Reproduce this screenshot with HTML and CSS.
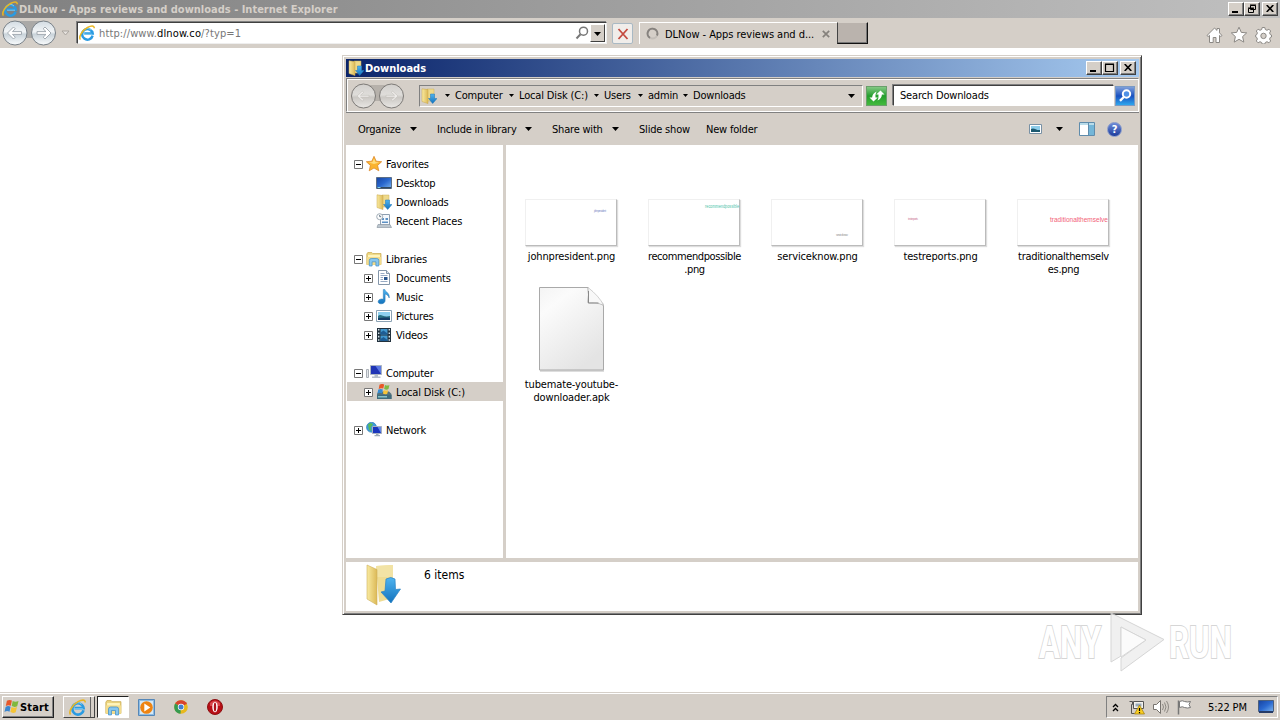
FILE: index.html
```html
<!DOCTYPE html>
<html lang="en">
<head>
<meta charset="utf-8">
<title>DLNow - Apps reviews and downloads</title>
<link rel="stylesheet" href="styles.css">
</head>
<body>
<svg class="defs" width="0" height="0" aria-hidden="true">
  <defs>
    <linearGradient id="gFolder" x1="0" x2="1"><stop offset="0" stop-color="#f9eaa0"/><stop offset="1" stop-color="#dcb957"/></linearGradient>
    <linearGradient id="gBlue" x1="0" y1="0" x2="0" y2="1"><stop offset="0" stop-color="#4fb4f0"/><stop offset="1" stop-color="#1272bd"/></linearGradient>
    <linearGradient id="gPaper" x1="0" y1="0" x2=".6" y2="1"><stop offset="0" stop-color="#f4f4f4"/><stop offset=".25" stop-color="#fbfbfb"/><stop offset="1" stop-color="#e4e4e4"/></linearGradient>
    <linearGradient id="gOrb" x1="0" y1="0" x2="0" y2="1"><stop offset="0" stop-color="#d3dce3"/><stop offset=".45" stop-color="#f1f4f6"/><stop offset=".55" stop-color="#c9d3da"/><stop offset="1" stop-color="#fafcfd"/></linearGradient>
    <linearGradient id="gOrb2" x1="0" y1="0" x2="0" y2="1"><stop offset="0" stop-color="#d2d0cd"/><stop offset=".45" stop-color="#dfddda"/><stop offset=".55" stop-color="#cbc8c4"/><stop offset="1" stop-color="#e9e7e4"/></linearGradient>
    <linearGradient id="gScreen" x1="0" y1="0" x2="1" y2="1"><stop offset="0" stop-color="#1743a0"/><stop offset=".5" stop-color="#2a68cf"/><stop offset="1" stop-color="#7cb5ee"/></linearGradient>
    <symbol id="ie" viewBox="0 0 16 16">
      <path d="M13.600 10.600A5.300 5.300 0 1 1 13.700 8.600H5.200" fill="none" stroke="#2a9be2" stroke-width="2.500"/>
      <path d="M13 9.200H5M4 6a5 5 0 0 1 8-1" fill="none" stroke="#8fd6f7" stroke-width=".8"/>
      <path d="M1.400 14.600C-.6 12 3 5.500 8.500 2.500 12 .6 15.500.3 15.200 3.300" fill="none" stroke="#e9b624" stroke-width="1.500"/>
    </symbol>
    <symbol id="dlfolder" viewBox="0 0 16 16">
      <path d="M6 1h7v12H6z" fill="#eed98a" stroke="#cfb05a" stroke-width=".5"/>
      <path d="M1 .8l6 .8v14L1 13.500z" fill="url(#gFolder)" stroke="#c9a648" stroke-width=".5"/>
      <path d="M9.500 6h4v4.500H16l-4.300 5-4.200-5h2z" fill="url(#gBlue)" stroke="#1f76b8" stroke-width=".5"/>
    </symbol>
    <symbol id="star" viewBox="0 0 16 16"><path d="M8 .3l2.200 4.900 5.500.5-4.100 3.700 1.200 5.400L8 12l-4.800 2.800 1.200-5.400L.3 5.700l5.500-.5z" fill="#fbb32e" stroke="#d98324" stroke-width=".7"/><path d="M8 2.500l1.500 3.600 3.700.4-5.200 1.600-5.200-1.600 3.700-.4z" fill="#ffdc7c"/></symbol>
    <symbol id="desktop" viewBox="0 0 16 16"><path d="M.5 2.500h15v11H.5z" fill="url(#gScreen)" stroke="#5c6f87"/><path d="M1 12h14v1.500H1z" fill="#34495f"/><path d="M1.500 12h3v1h-3z" fill="#7fd1ec"/></symbol>
    <symbol id="recent" viewBox="0 0 16 16"><path d="M4.500 1.500h9V12h-9z" fill="#f5f9fd" stroke="#8d9eb0"/><path d="M6 5h2v2H6zm3.500 0H12v2H9.500zM6 8.500h6v1.500H6z" fill="#5d91c5"/><path d="M2 11.500h12l1.500 3H1z" fill="#bcc6ce" stroke="#84919c" stroke-width=".6"/><circle cx="3.700" cy="3.700" r="3" fill="#fff" stroke="#a0abb5"/><path d="M3.700 1.900v1.800h1.500" fill="none" stroke="#678"/></symbol>
    <symbol id="lib" viewBox="0 0 16 16"><path d="M.8 3l1-1.500h4l1 1H15v11H.8z" fill="#ecd57f" stroke="#c8a74b" stroke-width=".7"/><path d="M2 3.800h12v4H2z" fill="#fff4bb"/><path d="M.8 6h14.400v7.800H.8z" fill="#f3dc8c"/><path d="M3.300 15V9.500q0-2 2-2h5.500q2 0 2 2V15H9.900v-4.200H6.100V15z" fill="#86c6ef" stroke="#3f8ec9" stroke-width=".7"/></symbol>
    <symbol id="doc" viewBox="0 0 16 16"><path d="M2.500.5h8l3 3v11h-11z" fill="#fff" stroke="#8496aa"/><path d="M10.500.5v3h3" fill="#dce6ef" stroke="#8496aa"/><path d="M4.500 3.500h4m-4 2h7m-7 2H7m-2.500 2H7m-2.500 2h7" stroke="#98abc4"/><path d="M8 7h3.500v3H8z" fill="#28558d"/></symbol>
    <symbol id="music" viewBox="0 0 16 16"><path d="M7.300.5h1.500c.6 2.500 5.200 3.600 4.400 8.500-.8-2.500-2.500-3.600-4.100-4v6.700c0 3.600-6.800 4.200-7 1.100-.1-2.200 3-3.500 5.200-2.500z" fill="url(#gBlue)" stroke="#2878b4" stroke-width=".5"/></symbol>
    <symbol id="pic" viewBox="0 0 16 16"><path d="M.5 2.500h15v11H.5z" fill="#fff" stroke="#8ba2b4"/><path d="M2 4h12v8H2z" fill="#8ed0ef"/><path d="M2 8c3-3 5 2 12 0v4H2z" fill="#287083"/><path d="M2 10c5 0 8-1 12 0v2H2z" fill="#163e68"/></symbol>
    <symbol id="video" viewBox="0 0 16 16"><path d="M1 1h14v14H1z" fill="#22313d"/><path d="M4.500 2h7v5.500h-7zm0 6.500h7V14h-7z" fill="#4298cf"/><path d="M4.500 5.500l3-2 4 3v1h-7zm0 6.500l3-2 4 3v1h-7z" fill="#1d5c94"/><path d="M2 2h1.400v1.600H2zm0 3.400h1.400V7H2zm0 3.400h1.400v1.600H2zm0 3.400h1.400v1.600H2zM12.600 2H14v1.600h-1.400zm0 3.400H14V7h-1.400zm0 3.400H14v1.600h-1.400zm0 3.400H14v1.600h-1.400z" fill="#d3e3ec"/></symbol>
    <symbol id="computer" viewBox="0 0 16 16"><path d="M.5 4.500h2v8h-2z" fill="#e6e9ec" stroke="#aab0b7"/><path d="M4.500.5h11v9h-11z" fill="#2035b5" stroke="#aab4c2"/><path d="M9.500 1h5.500v8z" fill="#5c7ae4"/><path d="M8.500 10h3.500v1.500h2.500V13H6v-1.500h2.500z" fill="#b5bfca"/></symbol>
    <symbol id="disk" viewBox="0 0 16 16"><path d="M1 9.500l2-2h10l2.500 2.500v5H1z" fill="#52727d"/><path d="M1 11h14.500v4H1z" fill="#3e6b7c"/><path d="M2 12h9v1.500H2z" fill="#86c2c9"/><path d="M3.500.8q2.500-1.500 4.700-.3L7.300 4.600q-2.300-1-4.600.3z" fill="#e95827"/><path d="M9 .9q2.400 1.200 4.400 0l-.9 4.200q-2.200 1.200-4.400-.2z" fill="#7fb943"/><path d="M2.300 5.600q2.200-1.200 4.600-.2L6 9.200q-2.300-1-4.600.3z" fill="#368cd2"/><path d="M7.800 5.900q2.200 1.200 4.400.1l-.9 3.800q-2.200 1.200-4.400-.2z" fill="#f7c536"/></symbol>
    <symbol id="network" viewBox="0 0 16 16"><circle cx="5.500" cy="5.300" r="5" fill="#3f9bdc" stroke="#257ab3" stroke-width=".6"/><path d="M2 2.500q3-3 5 0l-2.500 3 1 3.500L3 8z" fill="#58bb59"/><path d="M6.500 4.500h9v7h-9z" fill="#1b36bd" stroke="#a6b0c0"/><path d="M11.500 5H15v6z" fill="#658ae9"/><path d="M10 12h2.500v1H14v1.300H8.500V13H10z" fill="#9daab7"/></symbol>
    <symbol id="flag" viewBox="0 0 16 16"><path d="M2.900 1.800q2.500-1.600 5-.2L6.800 6.800q-2.400-1.400-5 .2z" fill="#e7582a"/><path d="M8.700 2q2.700 1.500 5.800-.1l-1.300 5.300q-2.700 1.500-5.500-.1z" fill="#80b83e"/><path d="M1.600 7.900q2.500-1.600 5-.2l-1.100 5q-2.400-1.400-5 .2z" fill="#3b86cf"/><path d="M7.500 8.100q2.700 1.500 5.500-.1l-1.300 5.200q-2.700 1.500-5.300-.1z" fill="#f5c435"/></symbol>
    <symbol id="plus" viewBox="0 0 9 9"><path d="M.5.5h8v8h-8z" fill="#fff" stroke="#777"/><path d="M2 4.500h5M4.500 2v5" stroke="#000"/></symbol>
    <symbol id="minus" viewBox="0 0 9 9"><path d="M.5.5h8v8h-8z" fill="#fff" stroke="#777"/><path d="M2 4.500h5" stroke="#000"/></symbol>
    <symbol id="arr" viewBox="0 0 7 4"><path d="M0 0h7L3.500 4z" fill="#000"/></symbol>
    <symbol id="xmark" viewBox="0 0 8 7"><path d="M.7 0L7.300 7M7.300 0L.7 7" stroke="#000" stroke-width="1.600"/></symbol>
  </defs>
</svg>

<div class="screen">
  <header class="ie-title">
    <svg class="i16"><use href="#ie"/></svg>
    <span class="ie-title-text">DLNow - Apps reviews and downloads - Internet Explorer</span>
    <div class="winbtns">
      <span class="wb"><svg width="12" height="10"><path d="M2 8h6" stroke="#000" stroke-width="2"/></svg></span>
      <span class="wb"><svg width="12" height="10"><path d="M4.500 1.500h5v4h-5zM4 1h6M2.500 4.500h5v4h-5zM2 4h6" fill="none" stroke="#000"/></svg></span>
      <span class="wb close"><svg width="8" height="7"><use href="#xmark"/></svg></span>
    </div>
  </header>
  <nav class="ie-nav">
    <svg class="orbs" width="57" height="28" viewBox="0 0 57 28">
      <path d="M14 2h29v17H14z" fill="#aaa9a7"/>
      <circle cx="15" cy="14" r="12" fill="url(#gOrb)" stroke="#788087"/><circle cx="43.500" cy="14" r="12" fill="url(#gOrb)" stroke="#788087"/>
      <path d="M7.500 14l6-6 1.800 1.800-2.800 2.800h9v2.800h-9l2.800 2.800L13.500 20zM51 14l-6-6-1.800 1.800 2.800 2.800h-9v2.800h9l-2.800 2.800L45 20z" fill="#fff" stroke="#9ba3aa" stroke-width=".9"/>
    </svg>
    <svg class="histarr" width="9" height="6"><path d="M1 1h7L4.500 5z" fill="#e6e2de" stroke="#aaa59f"/></svg>
    <div class="addr">
      <svg class="i16"><use href="#ie"/></svg>
      <span class="url">http://www.<b>dlnow.co</b>/?typ=1</span>
      <svg width="14" height="14" viewBox="0 0 14 14"><circle cx="8.500" cy="5.200" r="4" fill="none" stroke="#777" stroke-width="1.500"/><path d="M5.500 8.300L1.500 12.500" stroke="#777" stroke-width="2"/></svg>
      <span class="drop"><svg width="7" height="4"><use href="#arr"/></svg></span>
    </div>
    <span class="stop"><svg width="12" height="12" viewBox="0 0 12 12"><path d="M1.500 1l9 10M10.500 1l-9 10" stroke="#c44b40" stroke-width="1.800"/></svg></span>
    <div class="tab">
      <svg width="13" height="13" viewBox="0 0 13 13"><circle cx="6.500" cy="6.500" r="4.900" fill="none" stroke="#c3beb8" stroke-width="2"/><path d="M4 10.800A4.900 4.900 0 1 1 11 8.500" fill="none" stroke="#86827e" stroke-width="2"/></svg>
      <span class="tab-text">DLNow - Apps reviews and d...</span>
      <svg width="8" height="8" viewBox="0 0 8 8"><path d="M.8.800l6.400 6.400M7.200.800L.8 7.200" stroke="#85817c" stroke-width="1.700"/></svg>
    </div>
    <span class="newtab"></span>
    <svg class="tools" width="66" height="18" viewBox="0 0 66 18" fill="#fff" stroke="#8b8884" stroke-width="1">
      <path d="M1 9.500L8.500 2l2.500 2.400V2.500h2.500v4.400l2.500 2.600-1.200 1-1.300-1.100V16.500h-3.500v-5H7.200v5H3.500V9.400l-1.300 1.100z"/>
      <path d="M33 1.200l2.300 5.200 5.400.5-4.100 3.700 1.200 5.500-4.800-2.800-4.800 2.800 1.200-5.500-4.100-3.700 5.400-.5z"/>
      <path d="M56.200 1.500h2.600l.5 2 1.700.8 1.900-1.100 1.800 1.800-1.100 1.900.7 1.700 1.200.4v2l-1.200.4-.7 1.700 1.100 1.900-1.800 1.800-1.900-1.100-1.700.8-.5 1.500h-2.600l-.5-1.500-1.700-.8-1.900 1.100-1.800-1.800 1.100-1.900-.7-1.700-1-.4V9l1-.4.7-1.700-1.100-1.900 1.800-1.800L54 4.300l1.700-.8z"/><circle cx="57.500" cy="9.900" r="2.700" fill="#d5cfc8"/>
    </svg>
  </nav>

  <main class="page"></main>

  <footer class="taskbar">
    <button class="start"><svg class="i16"><use href="#flag"/></svg><span>Start</span></button>
    <span class="tb tb-ie"><svg width="17" height="17"><use href="#ie"/></svg></span>
    <span class="tb tb-ex"><svg width="17" height="17"><use href="#lib"/></svg></span>
    <svg class="q" width="17" height="17" viewBox="0 0 17 17"><path d="M.5.5h16v16H.5z" fill="#8dbce4" stroke="#5587b8"/><path d="M2 2h13v13H2z" fill="#d6e9f6"/><circle cx="8.500" cy="8.500" r="6.300" fill="#ee8413"/><path d="M6.300 4.500l6 4-6 4z" fill="#fff"/></svg>
    <svg class="q" width="14" height="14" viewBox="0 0 14 14"><circle cx="7" cy="7" r="6.800" fill="#e8b91e"/><path d="M7 7L1.100 3.600A6.800 6.800 0 0 1 13 3.700z" fill="#d8432f"/><path d="M7 7L1.100 3.600A6.800 6.800 0 0 0 6.500 13.800z" fill="#369a50"/><circle cx="7" cy="7" r="3.200" fill="#fff"/><circle cx="7" cy="7" r="2.500" fill="#437fd0"/></svg>
    <svg class="q" width="16" height="16" viewBox="0 0 16 16"><circle cx="8" cy="8" r="7.500" fill="#b80f16" stroke="#8d1012"/><path d="M3 4q5-5 10 0v3H3z" fill="#d8474a"/><ellipse cx="8" cy="8" rx="2.700" ry="5.300" fill="#fff"/><ellipse cx="8" cy="8" rx="1.200" ry="4.500" fill="#ad1218"/></svg>
    <div class="tray">
      <svg width="7" height="9" viewBox="0 0 7 9"><path d="M1 4l2.500-2.500L6 4M1 8l2.500-2.500L6 8" fill="none" stroke="#000" stroke-width="1.300"/></svg>
      <svg width="16" height="16" viewBox="0 0 16 16"><path d="M.5 2.500h3v3h-1v9h3" fill="none" stroke="#555"/><path d="M4.500 2.500h10v7h-10z" fill="#f4f2ed" stroke="#555"/><path d="M6.500 4.500h6v3h-6z" fill="#9ab"/><path d="M10.500 6l5 9h-10z" fill="#f9cd21" stroke="#9c7a0e" stroke-width=".7"/><path d="M10.500 9v3m0 1v1.200" stroke="#000" stroke-width="1.200"/></svg>
      <svg width="17" height="16" viewBox="0 0 17 16"><path d="M1.500 5.500h3l4-4v13l-4-4h-3z" fill="#fff" stroke="#77736e"/><path d="M10.500 5q2 3 0 6M12.500 3.500q3 4.500 0 9M14.500 2q4 6 0 12" fill="none" stroke="#8d8983"/></svg>
      <svg width="16" height="16" viewBox="0 0 16 16"><path d="M2.500 15.500V1.500" stroke="#777" stroke-width="1.500"/><path d="M3.500 2.500q3-1.500 5 0 3 1 6 0l-1.500 3 1.500 3q-3 1-6 0-2-1.500-5 0z" fill="#fff" stroke="#777"/></svg>
      <span class="clock">5:22 PM</span>
      <svg width="16" height="14" viewBox="0 0 16 14"><path d="M.5.500h15v11H.5z" fill="url(#gScreen)" stroke="#4d607c"/><path d="M1 11h14v2H1z" fill="#263b67"/></svg>
    </div>
  </footer>

  <section class="win">
    <header class="win-title">
      <svg class="i16"><use href="#dlfolder"/></svg><span class="win-name">Downloads</span>
      <div class="winbtns">
        <span class="wb"><svg width="12" height="10"><path d="M2 8h6" stroke="#000" stroke-width="2"/></svg></span>
        <span class="wb"><svg width="12" height="10"><path d="M1.500 1.500h8v7h-8zM1 1h9" fill="none" stroke="#000" stroke-width="1.200"/></svg></span>
        <span class="wb close"><svg width="8" height="7"><use href="#xmark"/></svg></span>
      </div>
    </header>
    <div class="win-nav">
      <svg class="orbs2" width="56" height="28" viewBox="0 0 56 28"><path d="M14 3h28v16H14z" fill="#b6b1ab"/><circle cx="14.500" cy="14" r="12" fill="url(#gOrb2)" stroke="#7d7a77"/><circle cx="42.500" cy="14" r="12" fill="url(#gOrb2)" stroke="#7d7a77"/><path d="M8 14l5.500-5 1 1.500-3 2.800H20v1.800h-8.500l3 2.500-1 1.500zM49 14l-5.500-5-1 1.500 3 2.800H37v1.800h8.500l-3 2.500 1 1.500z" fill="#eeecea" stroke="#c2bfbb" stroke-width=".6"/></svg>
      <div class="crumbs">
        <svg class="i16"><use href="#dlfolder"/></svg>
        <svg class="a"><use href="#arr"/></svg><span>Computer</span>
        <svg class="a"><use href="#arr"/></svg><span class="ld">Local Disk (C:)</span>
        <svg class="a"><use href="#arr"/></svg><span>Users</span>
        <svg class="a"><use href="#arr"/></svg><span>admin</span>
        <svg class="a"><use href="#arr"/></svg><span>Downloads</span>
        <svg class="a7"><use href="#arr"/></svg>
      </div>
      <span class="refresh"><svg width="18" height="16" viewBox="0 0 18 16"><path d="M5.500 2.500L1.500 6.500h2.600q.2 4 4.400 6-1.300-3-1-6h2.300zM12.500 13.500l4-4h-2.600q-.2-4-4.400-6 1.300 3 1 6H8.200z" fill="#fff" transform="matrix(1 0 0 -1 0 16)"/></svg></span>
      <div class="search">Search Downloads</div>
      <span class="searchbtn"><svg width="16" height="16" viewBox="0 0 16 16"><circle cx="9.500" cy="6" r="3.700" fill="#4f91e6" stroke="#fff" stroke-width="2"/><path d="M6.800 9L3 12.800" stroke="#fff" stroke-width="2.400"/></svg></span>
    </div>
    <div class="win-tools">
      <span>Organize</span><svg class="a7"><use href="#arr"/></svg>
      <span>Include in library</span><svg class="a7"><use href="#arr"/></svg>
      <span>Share with</span><svg class="a7"><use href="#arr"/></svg>
      <span>Slide show</span><span>New folder</span>
      <svg width="13" height="11" viewBox="0 0 13 11"><path d="M.5.5h12v9H.5z" fill="#fff" stroke="#7891a5"/><path d="M2 2h9v6H2z" fill="#8ecdea"/><path d="M2 5c3-2 5 1.500 9 1v2H2z" fill="#1c5970"/></svg>
      <svg class="a7"><use href="#arr"/></svg>
      <svg width="16" height="14" viewBox="0 0 16 14"><path d="M.5.5h15v13H.5z" fill="#fff" stroke="#5f8cac"/><path d="M1 1h14v2H1z" fill="#b9dcea"/><path d="M10 3h5v10h-5z" fill="#74b6d8"/><path d="M9.500 1v12" stroke="#5f8cac"/></svg>
      <span class="help">?</span>
    </div>
    <div class="win-body">
      <aside class="tree">
        <div class="row r0"><svg class="tg"><use href="#minus"/></svg><svg class="i16"><use href="#star"/></svg><span>Favorites</span></div>
        <div class="row leaf"><svg class="i16"><use href="#desktop"/></svg><span>Desktop</span></div>
        <div class="row leaf"><svg class="i16"><use href="#dlfolder"/></svg><span>Downloads</span></div>
        <div class="row leaf"><svg class="i16"><use href="#recent"/></svg><span>Recent Places</span></div>
        <div class="row r0 gap"><svg class="tg"><use href="#minus"/></svg><svg class="i16"><use href="#lib"/></svg><span>Libraries</span></div>
        <div class="row r1"><svg class="tg"><use href="#plus"/></svg><svg class="i16"><use href="#doc"/></svg><span>Documents</span></div>
        <div class="row r1"><svg class="tg"><use href="#plus"/></svg><svg class="i16"><use href="#music"/></svg><span>Music</span></div>
        <div class="row r1"><svg class="tg"><use href="#plus"/></svg><svg class="i16"><use href="#pic"/></svg><span>Pictures</span></div>
        <div class="row r1"><svg class="tg"><use href="#plus"/></svg><svg class="i16"><use href="#video"/></svg><span>Videos</span></div>
        <div class="row r0 gap"><svg class="tg"><use href="#minus"/></svg><svg class="i16"><use href="#computer"/></svg><span>Computer</span></div>
        <div class="row r1 sel"><svg class="tg"><use href="#plus"/></svg><svg class="i16"><use href="#disk"/></svg><span class="ld">Local Disk (C:)</span></div>
        <div class="row r0 gap"><svg class="tg"><use href="#plus"/></svg><svg class="i16"><use href="#network"/></svg><span>Network</span></div>
      </aside>
      <div class="files">
        <figure><div class="thumb"><svg width="90" height="45"><text x="68" y="12" class="tiny" fill="#8a94cc" textLength="12">johnpresident</text></svg></div><figcaption>johnpresident.png</figcaption></figure>
        <figure><div class="thumb"><svg width="90" height="45"><text x="56" y="8" class="mid" fill="#4cc4aa" textLength="34" lengthAdjust="spacingAndGlyphs">recommendpossible</text></svg></div><figcaption class="wide">recommendpossible<br>.png</figcaption></figure>
        <figure><div class="thumb"><svg width="90" height="45"><text x="64" y="36" class="tiny" fill="#999" textLength="12">serviceknow</text></svg></div><figcaption>serviceknow.png</figcaption></figure>
        <figure><div class="thumb"><svg width="90" height="45"><text x="13" y="20" class="tiny" fill="#d0809a" textLength="10">testreports</text></svg></div><figcaption>testreports.png</figcaption></figure>
        <figure><div class="thumb"><svg width="90" height="45"><text x="32" y="22" class="big" fill="#f25f78" textLength="58" lengthAdjust="spacingAndGlyphs">traditionalthemselve</text></svg></div><figcaption class="wide2">traditionalthemselv<br>es.png</figcaption></figure>
        <figure class="apk"><svg width="68" height="87" viewBox="0 0 68 87"><path d="M2 2h48l16 16v68H2z" fill="#bbb" opacity=".5"/><path d="M1.500 1.500H50q1 7 0 15 11-1 15.500 3v64.500h-64z" fill="url(#gPaper)" stroke="#a9a9a9"/><path d="M50 1.500q1 7 0 15.500 9-1 15.500 2Q61 10 50 1.500z" fill="#f8f8f8" stroke="#bbb" stroke-width=".7"/><path d="M50.500 5v12h10" fill="none" stroke="#888"/></svg><figcaption>tubemate-youtube-<br>downloader.apk</figcaption></figure>
      </div>
    </div>
    <div class="details">
      <svg width="36" height="42" viewBox="0 0 36 42"><path d="M10 2l17-1v33l-14 4z" fill="#efdc92"/><path d="M10 2l17-1v12H10z" fill="#f2e3a5"/><path d="M1 1l10 4.500V41L1 35z" fill="url(#gFolder)" stroke="#ceb05c" stroke-width=".6"/><path d="M20 15q5-3 9 0l.5 10.500 5-.5L25 39 15 28l4-1z" fill="url(#gBlue)" stroke="#2a82c4" stroke-width=".7"/></svg>
      <span>6 items</span>
    </div>
  </section>

  <svg class="mark" width="200" height="64" viewBox="0 0 200 64">
    <g fill="#fff" stroke="#cfcfcf" stroke-width="2">
      <text x="4" y="47" class="mk" textLength="62" lengthAdjust="spacingAndGlyphs">ANY</text>
      <text x="134" y="47" class="mk" textLength="63" lengthAdjust="spacingAndGlyphs">RUN</text>
      <path d="M76 2l53 26.500-43 31.500V47l25-18-25-13v29l-10 6z" fill="#eee" stroke-width="1"/>
      <path d="M86 16l25 13-25 17z" fill="#fbfbfb" stroke-width="1"/>
    </g>
  </svg>
</div>
</body>
</html>
```
FILE: styles.css
```css
* { box-sizing: border-box; }
body { margin: 0; font: 11px/13px "DejaVu Sans Condensed", "DejaVu Sans", sans-serif; font-stretch: condensed; letter-spacing: -0.2px; color: #000; background: #fff; }
svg { display: block; flex: none; }
span { white-space: nowrap; }
.defs { position: absolute; }
.screen { position: relative; width: 1280px; height: 720px; overflow: hidden; display: flex; flex-direction: column; background: #fff; }
.i16 { width: 16px; height: 16px; }

.ie-title { height: 18px; flex: none; display: flex; align-items: center; padding: 0 2px; background: linear-gradient(90deg, #808080, #c0c0c0); color: #d5cfc8; font-weight: bold; }
.ie-title-text { margin-left: 1px; letter-spacing: 0; }
.winbtns { display: flex; margin-left: auto; }
.wb { width: 16px; height: 14px; padding: 1px 0 0 1px; background: #d5cfc8; border: 1px solid; border-color: #fff #404040 #404040 #fff; box-shadow: inset -1px -1px #808080; }
.close { margin-left: 2px; padding: 2px 0 0 3px; }

.ie-nav { height: 30px; flex: none; display: flex; align-items: center; background: #d5cfc8; }
.histarr { margin-left: 4px; }
.addr { width: 530px; height: 22px; margin-left: 7px; padding: 0 1px 0 1px; display: flex; align-items: center; background: #fff; border: 1px solid; border-color: #404040 #eee #eee #404040; box-shadow: -1px -1px #808080; }
.url { margin: 0 auto 0 4px; padding-top: 1px; color: #777; letter-spacing: .12px; }
.url b { font-weight: normal; color: #000; }
.drop { width: 15px; height: 18px; margin-left: 1px; padding: 7px 3px; background: #d5cfc8; border: 1px solid; border-color: #fff #404040 #404040 #fff; }
.stop { width: 21px; height: 21px; margin-left: 5px; padding: 4px; background: #f0edea; border: 1px solid #a9b9c4; border-radius: 2px; }
.tab { width: 198px; height: 22px; margin-left: 6px; padding-left: 6px; display: flex; align-items: center; border-top: 1px solid #fff; border-left: 1px solid #fff; }
.tab-text { width: 157px; margin-left: 6px; padding-top: 1px; letter-spacing: -.05px; }
.newtab { width: 31px; height: 22px; background: #bab3ad; border: 1px solid; border-color: #d5cfc8 #111 #111 #444; box-shadow: inset -1px -1px #777; }
.tools { margin: 3px 8px 0 auto; }
.page { flex: 1; }

.taskbar { height: 27px; flex: none; display: flex; align-items: center; padding: 0 2px; background: #d5cfc8; border-top: 1px solid #fff; box-shadow: 0 -1px #d5cfc8; }
.start { width: 52px; height: 22px; padding: 0 1px; display: flex; align-items: center; font: inherit; font-weight: bold; letter-spacing: .15px; color: #000; background: #d5cfc8; border: 1px solid; border-color: #fff #222 #222 #fff; box-shadow: inset -1px -1px #808080; }
.tb { height: 22px; display: flex; align-items: center; justify-content: center; border: 1px solid; }
.tb-ie { width: 32px; margin-left: 9px; padding-right: 4px; border-color: #fff #444 #444 #fff; box-shadow: inset -3px 0 #d5cfc8, inset -4px 0 #666; }
.tb-ex { width: 32px; margin-left: 2px; background: #fff; border-color: #222 #fff #fff #222; }
.q { margin-left: 9px; }
.q + .q { margin-left: 19px; }
.tray { width: 172px; height: 22px; margin-left: auto; padding: 0 0 0 5px; display: flex; align-items: center; border: 1px solid; border-color: #808080 #fff #fff #808080; }
.tray svg:nth-child(2) { margin-left: 10px; }
.tray svg:nth-child(3), .tray svg:nth-child(4) { margin-left: 7px; }
.clock { width: 41px; margin: 0 9px 0 16px; letter-spacing: -.15px; }

.win { position: absolute; left: 342px; top: 55px; width: 800px; height: 560px; padding: 3px 2px 2px 3px; display: flex; flex-direction: column; background: #d5cfc8; border: 1px solid; border-color: #d5cfc8 #404040 #404040 #d5cfc8; box-shadow: inset 1px 1px #fff, inset -1px -1px #808080; }
.win-title { height: 18px; flex: none; display: flex; align-items: center; padding: 0 3px 0 2px; color: #fff; font-weight: bold; background: linear-gradient(90deg, #0a246a, #a6caf0); }
.win-name { margin-left: 1px; letter-spacing: 0; }
.win-nav { height: 34px; flex: none; margin-top: 1px; display: flex; align-items: center; padding: 1px 1px 0 2px; border: 1px solid; border-color: #808080 #fff #fff #808080; box-shadow: inset 1px 1px #fff, 0 1px #808080; }
.crumbs { width: 444px; height: 22px; margin-left: 14px; padding-left: 1px; display: grid; grid-template-columns: 24px 10px 54px 10px 75px 10px 34px 10px 35px 10px 155px 7px; align-items: center; border: 1px solid; border-color: #808080 #fff #fff #808080; }
.a { width: 5px; height: 3px; }
.a7 { width: 7px; height: 4px; }
.ld { letter-spacing: -.15px; }
.refresh { width: 21px; height: 20px; margin-left: 3px; padding: 1px 0 0 1px; border: 1px solid #6a9f6b; background: linear-gradient(#83c884, #259e2d 50%, #43ba3c); }
.search { width: 221px; height: 21px; margin-left: 6px; padding: 3px 6px; letter-spacing: -.17px; background: #fff; border: 1px solid; border-color: #404040 #fff #fff #404040; box-shadow: -1px -1px #808080; }
.searchbtn { width: 20px; height: 20px; margin-left: 1px; padding: 1px; border: 1px solid #7a9ac4; background: linear-gradient(#7f9fd9, #1950c0 50%, #2ea6ed); }
.win-tools { height: 32px; flex: none; margin-top: 1px; padding-left: 12px; display: grid; grid-template-columns: 52px 27px 88px 27px 60px 27px 67px 323px 27px 23px 28px 16px; align-items: center; }
.help { width: 15px; height: 15px; border-radius: 50%; border: 1px solid #879acb; background: linear-gradient(#6d8bd8, #1c3c9c); color: #fff; font-weight: bold; text-align: center; letter-spacing: 0; }
.win-body { height: 413px; flex: none; margin-right: 1px; display: flex; gap: 3px; }
.tree { width: 157px; padding: 9px 0 0 1px; background: #fff; }
.row { height: 19px; display: flex; align-items: center; }
.row span { margin-left: 4px; padding-top: 2px; }
.gap { margin-top: 19px; }
.r0 { padding-left: 7px; }
.r1 { padding-left: 17px; }
.leaf { padding-left: 29px; }
.tg { width: 9px; height: 9px; margin: 2px 3px 0 0; }
.sel { background: #d5cfc8; }
.files { flex: 1; padding: 51px 0 0 4px; display: grid; grid-template-columns: repeat(5, 123px); grid-template-rows: 90px auto; align-content: start; background: #fff; }
figure { margin: 0; display: flex; flex-direction: column; align-items: center; text-align: center; }
.thumb { width: 92px; height: 47px; margin-top: 3px; margin-right: 1px; border: 1px solid #f0f0f0; border-right-color: #bbb; border-bottom-color: #bbb; box-shadow: 1px 1px 1px #ddd; }
.thumb svg { overflow: visible; }
figcaption { margin-top: 4px; white-space: nowrap; letter-spacing: -.15px; }
.wide { letter-spacing: -.4px; }
.wide2 { letter-spacing: -.3px; }
.apk figcaption { margin-top: 5px; }
.tiny { font: 3px "Liberation Sans", sans-serif; letter-spacing: 0; }
.mid { font: 5px "Liberation Sans", sans-serif; letter-spacing: 0; }
.big { font: 7px "Liberation Sans", sans-serif; letter-spacing: 0; }
.details { height: 49px; flex: none; margin: 4px 1px 0 0; padding: 2px 0 0 20px; display: flex; background: #fff; }
.details span { margin: 5px 0 0 22px; font-size: 12px; letter-spacing: 0; }
.mark { position: absolute; left: 1035px; top: 611px; opacity: .85; overflow: visible; }
.mk { font: bold 45px Roboto, sans-serif; letter-spacing: 0; paint-order: stroke; }
```
